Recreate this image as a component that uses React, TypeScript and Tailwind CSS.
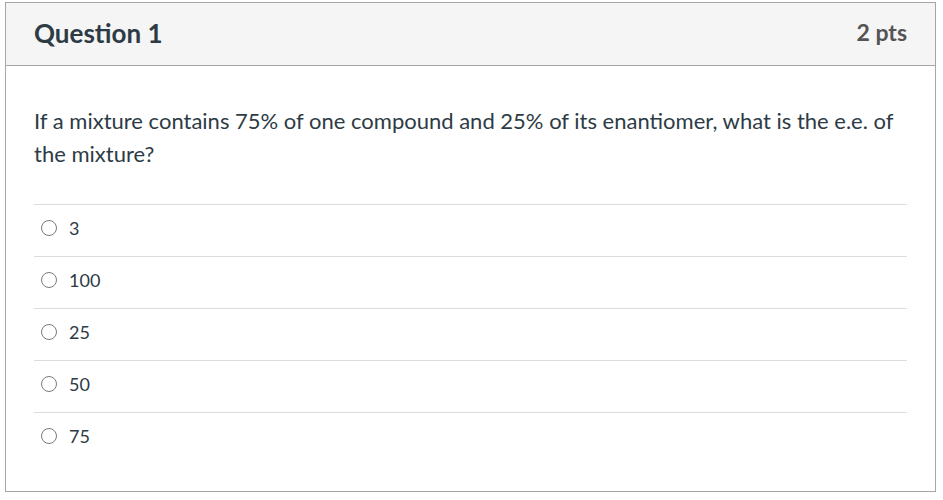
const answers = ['3', '100', '25', '50', '75'];

export default function App() {
  return (
    <div className="bg-white w-[943px] h-[500px] pt-[2px] pl-[5px] font-['Lato','Liberation_Sans',sans-serif]">
      <div className="w-[931px] h-[490px] border border-[#a6a6a6] flex flex-col">
        {/* Header */}
        <div className="h-[63px] shrink-0 bg-[#f5f5f5] border-b border-[#a6a6a6] px-[28px] pb-[3px] flex items-center justify-between">
          <h2 className="text-[26px] font-bold text-[#2d3b45] leading-none">Question 1</h2>
          <span className="text-[23px] font-bold text-[#545454] leading-none">2 pts</span>
        </div>

        {/* Body */}
        <div className="px-[28px] pt-[38px]">
          <p className="text-[22px] leading-[33px] text-[#2d3b45]">
            If a mixture contains 75% of one compound and 25% of its enantiomer, what is the e.e. of the mixture?
          </p>

          <div className="mt-[34px]">
            {answers.map((a) => (
              <label key={a} className="h-[52px] border-t border-[#dcdcdc] flex items-center gap-[12px] pl-[7px] pb-[5px]">
                <span className="w-[16px] h-[16px] rounded-full border border-[#7a7a7a] bg-white" />
                <span className="text-[18px] text-[#2d3b45]">{a}</span>
              </label>
            ))}
          </div>
        </div>
      </div>
    </div>
  );
}
